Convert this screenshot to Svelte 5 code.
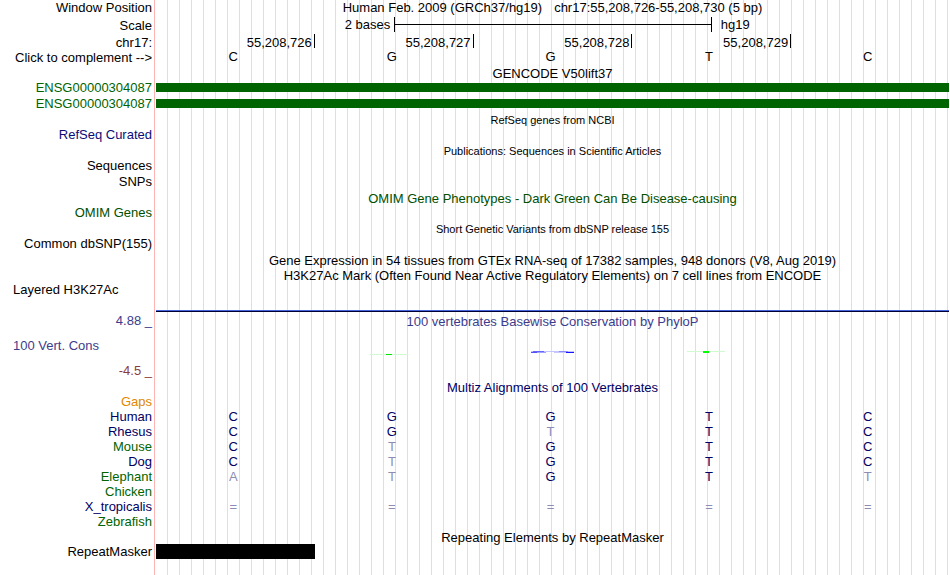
<script lang="ts">
	const assembly = "Human Feb. 2009 (GRCh37/hg19)";
	const position = "chr17:55,208,726-55,208,730 (5 bp)";
	const ticks = ["55,208,726", "55,208,727", "55,208,728", "55,208,729", ""];
	const sequence = ["C", "G", "G", "T", "C"];
	const transcripts = ["ENSG00000304087", "ENSG00000304087"];

	// lower case bases differ from the human sequence
	const species = [
		{ name: "Gaps", color: "orange", bases: "" },
		{ name: "Human", color: "navy", bases: "CGGTC" },
		{ name: "Rhesus", color: "navy", bases: "CGtTC" },
		{ name: "Mouse", color: "green", bases: "CtGTC" },
		{ name: "Dog", color: "navy", bases: "CtGTC" },
		{ name: "Elephant", color: "green", bases: "atGTt" },
		{ name: "Chicken", color: "green", bases: "" },
		{ name: "X_tropicalis", color: "navy", bases: "=====" },
		{ name: "Zebrafish", color: "green", bases: "" }
	];

	function isMismatch(base: string) {
		return base === "=" || base !== base.toUpperCase();
	}
</script>

{#snippet heading(text: string, kind = "")}
	<div class="row">
		<div class="title {kind}">{text}</div>
	</div>
{/snippet}

{#snippet label(text: string, kind = "")}
	<div class="row tall">
		<div class="label {kind}">{text}</div>
	</div>
{/snippet}

<main class="browser">
	<div class="row tall">
		<div class="label">Window Position</div>
		<div class="title position"><span>{assembly}</span><span>{position}</span></div>
	</div>
	<div class="row ruler">
		<div class="label">Scale</div>
		<div class="scale">
			<span class="scale-size">2 bases</span>
			<span class="scale-bar"></span>
			<span class="scale-db">hg19</span>
		</div>
	</div>
	<div class="row ruler">
		<div class="label">chr17:</div>
		<div class="ticks">
			{#each ticks as tick}
				<span class:tick={tick !== ""}>{tick}</span>
			{/each}
		</div>
	</div>
	<div class="row">
		<div class="label">Click to complement --&gt;</div>
		<div class="bases sequence">
			{#each sequence as base}
				<span>{base}</span>
			{/each}
		</div>
	</div>

	{@render heading("GENCODE V50lift37")}
	{#each transcripts as name}
		<div class="row tall">
			<div class="label gene">{name}</div>
			<div class="exon"></div>
		</div>
	{/each}

	{@render heading("RefSeq genes from NCBI", "small")}
	{@render label("RefSeq Curated", "refseq")}
	{@render heading("Publications: Sequences in Scientific Articles", "small")}
	{@render label("Sequences")}
	{@render label("SNPs")}
	{@render heading("OMIM Gene Phenotypes - Dark Green Can Be Disease-causing", "omim")}
	{@render label("OMIM Genes", "omim")}
	{@render heading("Short Genetic Variants from dbSNP release 155", "small")}
	{@render label("Common dbSNP(155)")}
	{@render heading("Gene Expression in 54 tissues from GTEx RNA-seq of 17382 samples, 948 donors (V8, Aug 2019)")}
	{@render heading("H3K27Ac Mark (Often Found Near Active Regulatory Elements) on 7 cell lines from ENCODE")}

	<div class="row histone">
		<div class="label start">Layered H3K27Ac</div>
		<div class="baseline"></div>
	</div>

	<div class="row limit">
		<div class="label cons">4.88 _</div>
		<div class="title cons">100 vertebrates Basewise Conservation by PhyloP</div>
	</div>
	<div class="row wiggle">
		<div class="label start cons">100 Vert. Cons</div>
		<svg viewBox="0 0 793 32" preserveAspectRatio="none" aria-hidden="true">
			<path d="M214 24.5H252" stroke="#d0fad0" />
			<path d="M230 24.5H236" stroke="#00e600" />
			<path d="M375 21H418V22H375z" fill="#c4c4ff" />
			<path d="M375 22.5H381" stroke="#5050ff" />
			<path d="M377 21.5H388" stroke="#6464ff" />
			<path d="M381 22.5H390" stroke="#a0a0ff" />
			<path d="M398 22.5H412" stroke="#c8c8ff" />
			<path d="M403 21.5H412" stroke="#8c8cff" />
			<path d="M410 22.5H418" stroke="#1414ff" />
			<path d="M531 21.5H569" stroke="#d0fad0" />
			<path d="M547 22H553" stroke="#00ff00" stroke-width="2" />
		</svg>
	</div>
	<div class="row limit">
		<div class="label negative">-4.5 _</div>
	</div>

	{@render heading("Multiz Alignments of 100 Vertebrates", "navy")}
	{#each species as { name, color, bases }}
		<div class="row">
			<div class="label {color}">{name}</div>
			<div class="bases navy">
				{#each bases as base}
					<span class:mismatch={isMismatch(base)}>{base.toUpperCase()}</span>
				{/each}
			</div>
		</div>
	{/each}

	{@render heading("Repeating Elements by RepeatMasker")}
	<div class="row">
		<div class="label">RepeatMasker</div>
		<div class="repeats"><div class="repeat"></div></div>
	</div>
</main>

<style>
	:global(body) {
		margin: 0;
		background: #fff;
	}

	.browser {
		box-sizing: border-box;
		min-height: 100vh;
		padding-right: 1px;
		color: #000;
		font: 13px/15px "Liberation Sans", Arial, Helvetica, sans-serif;
		white-space: nowrap;
		background:
			linear-gradient(#ffb4b4, #ffb4b4) 154px 0 / 1px 100% no-repeat,
			repeating-linear-gradient(to right, transparent 0 11px, #dcdcf7 11px 12px) 156px 0 no-repeat;
	}

	.row {
		display: grid;
		grid-template-columns: 152px minmax(0, 1fr);
		column-gap: 4px;
		height: 15px;
	}
	.tall {
		height: 16px;
		line-height: 16px;
	}
	.ruler {
		height: 17px;
		line-height: 17px;
	}
	.limit {
		height: 17px;
		line-height: 18px;
	}

	.label {
		grid-column: 1;
		text-align: right;
	}
	.label.start {
		padding-left: 13px;
		text-align: left;
	}
	.ruler .label {
		line-height: 19px;
	}
	.title {
		grid-column: 2;
		line-height: 17px;
		text-align: center;
	}
	.limit .title {
		line-height: 20px;
	}
	.small {
		font-size: 11px;
	}
	.position {
		display: flex;
		justify-content: center;
		gap: 12px;
		line-height: 15px;
	}

	.scale {
		display: grid;
		grid-template-columns: 3fr 4fr 3fr;
		margin-right: -1px;
	}
	.scale-size {
		padding-right: 4px;
		text-align: right;
	}
	.scale-bar {
		height: 15px;
		margin-top: 1px;
		border: solid #000;
		border-width: 0 1px;
		background: linear-gradient(#000, #000) 0 7px / 100% 1px no-repeat;
	}
	.scale-db {
		padding-left: 9px;
	}

	.ticks,
	.bases {
		display: grid;
		grid-template-columns: repeat(5, 1fr);
	}
	.ticks {
		margin-right: -1px;
	}
	.tick {
		height: 14px;
		margin-top: 1px;
		padding-right: 2px;
		border-right: 1px solid #000;
		text-align: right;
	}
	.bases {
		margin: 0 2px 0 -2px;
		text-align: center;
	}
	.sequence {
		line-height: 13px;
	}

	.exon {
		height: 9px;
		margin-top: 3px;
		background: #006400;
	}
	.histone {
		height: 30px;
	}
	.baseline {
		align-self: end;
		height: 1px;
		border-top: 1px solid #4664dc;
		background: #000032;
	}
	.wiggle {
		height: 33px;
		line-height: 34px;
	}
	.wiggle svg {
		width: 100%;
		height: 32px;
		margin-top: 1px;
	}
	.repeat {
		width: 20%;
		height: 15px;
		background: #000;
	}

	.gene {
		color: #006400;
	}
	.refseq {
		color: #0c0c78;
	}
	.omim {
		color: #005000;
	}
	.cons {
		color: #3c3c8c;
	}
	.negative {
		color: #8c3c3c;
	}
	.navy {
		color: #000064;
	}
	.green {
		color: #006400;
	}
	.orange {
		color: #e18700;
	}
	.mismatch {
		color: #8c8cb4;
	}
</style>
